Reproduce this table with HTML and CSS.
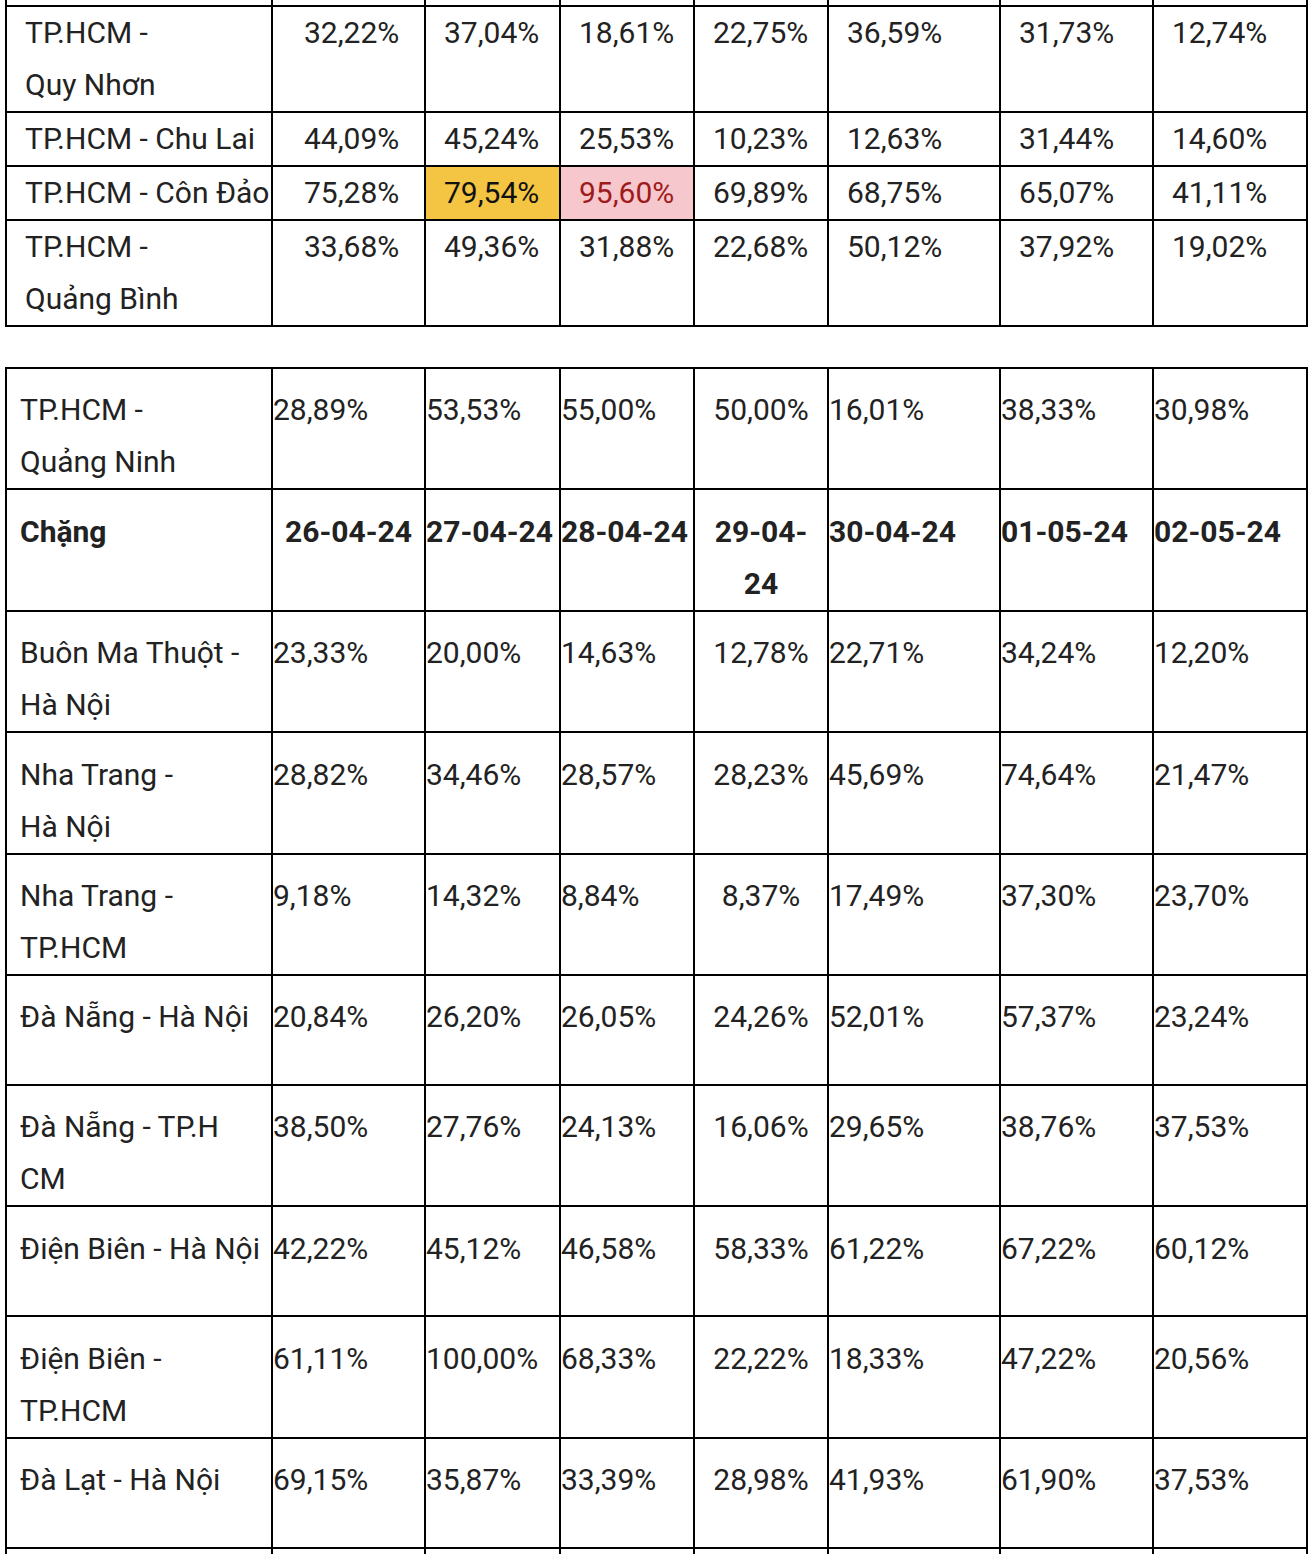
FILE: index.html
```html
<!DOCTYPE html>
<html lang="vi">
<head>
<meta charset="utf-8">
<title>Tỉ lệ đặt chỗ</title>
<link rel="stylesheet" href="styles.css">
</head>
<body>
<div class="page">
  <table class="grid grid-a">
    <colgroup>
      <col class="c1"><col class="c2"><col class="c3"><col class="c4"><col class="c5"><col class="c6"><col class="c7"><col class="c8">
    </colgroup>
    <tbody>
      <tr class="stub"><td></td><td></td><td></td><td></td><td></td><td></td><td></td><td></td></tr>
      <tr><td>TP.HCM -<br>Quy Nhơn</td><td>32,22%</td><td>37,04%</td><td>18,61%</td><td>22,75%</td><td>36,59%</td><td>31,73%</td><td>12,74%</td></tr>
      <tr><td>TP.HCM - Chu Lai</td><td>44,09%</td><td>45,24%</td><td>25,53%</td><td>10,23%</td><td>12,63%</td><td>31,44%</td><td>14,60%</td></tr>
      <tr><td>TP.HCM - Côn Đảo</td><td>75,28%</td><td class="hl-yellow">79,54%</td><td class="hl-pink">95,60%</td><td>69,89%</td><td>68,75%</td><td>65,07%</td><td>41,11%</td></tr>
      <tr><td>TP.HCM -<br>Quảng Bình</td><td>33,68%</td><td>49,36%</td><td>31,88%</td><td>22,68%</td><td>50,12%</td><td>37,92%</td><td>19,02%</td></tr>
    </tbody>
  </table>

  <table class="grid grid-b">
    <colgroup>
      <col class="c1"><col class="c2"><col class="c3"><col class="c4"><col class="c5"><col class="c6"><col class="c7"><col class="c8">
    </colgroup>
    <tbody>
      <tr><td>TP.HCM -<br>Quảng Ninh</td><td>28,89%</td><td>53,53%</td><td>55,00%</td><td>50,00%</td><td>16,01%</td><td>38,33%</td><td>30,98%</td></tr>
      <tr class="head"><td>Chặng</td><td class="center">26-04-24</td><td>27-04-24</td><td>28-04-24</td><td>29-04-<br>24</td><td>30-04-24</td><td>01-05-24</td><td>02-05-24</td></tr>
      <tr><td>Buôn Ma Thuột -<br>Hà Nội</td><td>23,33%</td><td>20,00%</td><td>14,63%</td><td>12,78%</td><td>22,71%</td><td>34,24%</td><td>12,20%</td></tr>
      <tr><td>Nha Trang -<br>Hà Nội</td><td>28,82%</td><td>34,46%</td><td>28,57%</td><td>28,23%</td><td>45,69%</td><td>74,64%</td><td>21,47%</td></tr>
      <tr><td>Nha Trang -<br>TP.HCM</td><td>9,18%</td><td>14,32%</td><td>8,84%</td><td>8,37%</td><td>17,49%</td><td>37,30%</td><td>23,70%</td></tr>
      <tr class="single"><td>Đà Nẵng - Hà Nội</td><td>20,84%</td><td>26,20%</td><td>26,05%</td><td>24,26%</td><td>52,01%</td><td>57,37%</td><td>23,24%</td></tr>
      <tr><td>Đà Nẵng - TP.H<br>CM</td><td>38,50%</td><td>27,76%</td><td>24,13%</td><td>16,06%</td><td>29,65%</td><td>38,76%</td><td>37,53%</td></tr>
      <tr class="single"><td>Điện Biên - Hà Nội</td><td>42,22%</td><td>45,12%</td><td>46,58%</td><td>58,33%</td><td>61,22%</td><td>67,22%</td><td>60,12%</td></tr>
      <tr><td>Điện Biên -<br>TP.HCM</td><td>61,11%</td><td>100,00%</td><td>68,33%</td><td>22,22%</td><td>18,33%</td><td>47,22%</td><td>20,56%</td></tr>
      <tr class="single"><td>Đà Lạt - Hà Nội</td><td>69,15%</td><td>35,87%</td><td>33,39%</td><td>28,98%</td><td>41,93%</td><td>61,90%</td><td>37,53%</td></tr>
      <tr class="tail"><td></td><td></td><td></td><td></td><td></td><td></td><td></td><td></td></tr>
    </tbody>
  </table>
</div>
</body>
</html>
```

FILE: styles.css
```css
html, body {
  margin: 0;
  padding: 0;
  background: #ffffff;
}

body {
  font-family: Roboto, "Noto Sans", "Liberation Sans", sans-serif;
  color: #222222;
}

.page {
  padding: 0 6px 0 5px;
}

.grid {
  border-collapse: collapse;
  table-layout: fixed;
  width: 1303px;
  font-size: 30px;
  line-height: 52px;
}

.grid td {
  border: 2px solid #000000;
  vertical-align: top;
  white-space: nowrap;
  padding: 0;
  text-align: left;
}

.c1 { width: 266px; }
.c2 { width: 153px; }
.c3 { width: 135px; }
.c4 { width: 134px; }
.c5 { width: 134px; }
.c6 { width: 172px; }
.c7 { width: 153px; }
.c8 { width: 154px; }

/* ---- first table ---- */
.grid-a .stub td {
  border-top: none;
  height: 5px;
  line-height: 5px;
}

.grid-a td {
  padding-left: 18px;
}

.grid-a td:nth-child(2) {
  padding-left: 31px;
}

.grid-a td.hl-yellow {
  background: #f4c443;
  color: #111111;
}

.grid-a td.hl-pink {
  background: #f6c7cd;
  color: #9e1b1b;
}

/* ---- second table ---- */
.grid-b {
  margin-top: 40px;
}

.grid-b td {
  padding-top: 15.4px;
}

.grid-b td:first-child {
  padding-left: 13px;
}

.grid-b td:nth-child(5) {
  text-align: center;
}

.grid-b .head td {
  font-weight: 700;
}

.grid-b .head td.center {
  text-align: center;
}

.grid-b .single td {
  padding-bottom: 40.6px;
}

.grid-b .tail td {
  height: 60px;
  border-bottom: none;
}
```
